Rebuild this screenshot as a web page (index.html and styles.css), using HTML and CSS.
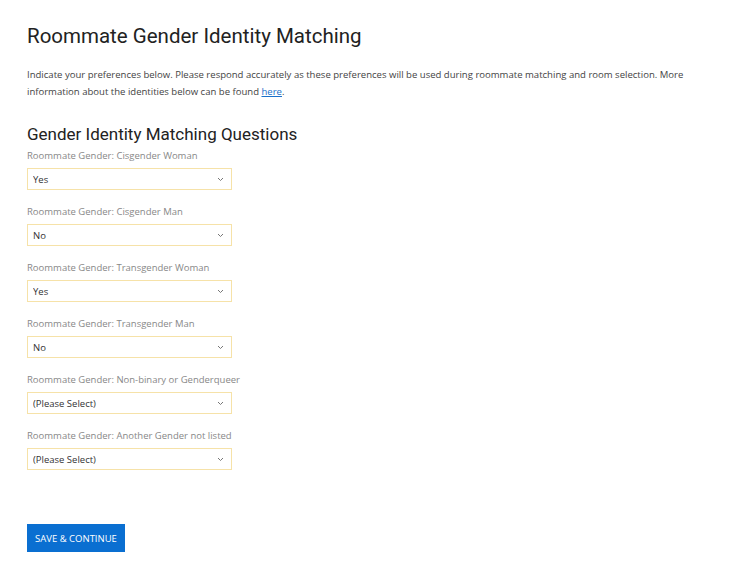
FILE: index.html
```html
<!DOCTYPE html>
<html lang="en">

<head>
    <meta charset="UTF-8">
    <meta name="viewport" content="width=device-width, initial-scale=1.0">
    <title>Roommate Gender Identity Matching</title>
    <link rel="stylesheet" href="styles.css">
</head>

<body>
    <div class="page">
        <h1 class="title">Roommate Gender Identity Matching</h1>
        <p class="intro">Indicate your preferences below. Please respond accurately as these preferences will be used during roommate matching and room selection. More information about the identities below can be found <a href="#">here</a>.</p>

        <h2 class="subtitle">Gender Identity Matching Questions</h2>

        <div class="field">
            <label class="label">Roommate Gender: Cisgender Woman</label>
            <div class="select-wrap">
                <select class="select">
                    <option>(Please Select)</option>
                    <option selected>Yes</option>
                    <option>No</option>
                </select>
                <svg class="chev" width="7" height="5" viewBox="0 0 7 5"><path d="M1 1 L3.5 3.5 L6 1" fill="none" stroke="#777" stroke-width="1"/></svg>
            </div>
        </div>

        <div class="field">
            <label class="label">Roommate Gender: Cisgender Man</label>
            <div class="select-wrap">
                <select class="select">
                    <option>(Please Select)</option>
                    <option>Yes</option>
                    <option selected>No</option>
                </select>
                <svg class="chev" width="7" height="5" viewBox="0 0 7 5"><path d="M1 1 L3.5 3.5 L6 1" fill="none" stroke="#777" stroke-width="1"/></svg>
            </div>
        </div>

        <div class="field">
            <label class="label">Roommate Gender: Transgender Woman</label>
            <div class="select-wrap">
                <select class="select">
                    <option>(Please Select)</option>
                    <option selected>Yes</option>
                    <option>No</option>
                </select>
                <svg class="chev" width="7" height="5" viewBox="0 0 7 5"><path d="M1 1 L3.5 3.5 L6 1" fill="none" stroke="#777" stroke-width="1"/></svg>
            </div>
        </div>

        <div class="field">
            <label class="label">Roommate Gender: Transgender Man</label>
            <div class="select-wrap">
                <select class="select">
                    <option>(Please Select)</option>
                    <option>Yes</option>
                    <option selected>No</option>
                </select>
                <svg class="chev" width="7" height="5" viewBox="0 0 7 5"><path d="M1 1 L3.5 3.5 L6 1" fill="none" stroke="#777" stroke-width="1"/></svg>
            </div>
        </div>

        <div class="field">
            <label class="label">Roommate Gender: Non-binary or Genderqueer</label>
            <div class="select-wrap">
                <select class="select">
                    <option selected>(Please Select)</option>
                    <option>Yes</option>
                    <option>No</option>
                </select>
                <svg class="chev" width="7" height="5" viewBox="0 0 7 5"><path d="M1 1 L3.5 3.5 L6 1" fill="none" stroke="#777" stroke-width="1"/></svg>
            </div>
        </div>

        <div class="field">
            <label class="label">Roommate Gender: Another Gender not listed</label>
            <div class="select-wrap">
                <select class="select">
                    <option selected>(Please Select)</option>
                    <option>Yes</option>
                    <option>No</option>
                </select>
                <svg class="chev" width="7" height="5" viewBox="0 0 7 5"><path d="M1 1 L3.5 3.5 L6 1" fill="none" stroke="#777" stroke-width="1"/></svg>
            </div>
        </div>

        <button class="btn">Save &amp; Continue</button>
    </div>
</body>

</html>
```

FILE: styles.css
```css
body {
    margin: 0;
    background-color: #fff;
    font-family: "Open Sans", "Liberation Sans", sans-serif;
    color: #333;
}

.page {
    padding: 23px 27px 0 27px;
}

.title {
    margin: 0;
    font-family: Roboto, "Liberation Sans", sans-serif;
    font-weight: 400;
    font-size: 20.5px;
    line-height: 26px;
    color: #222;
}

.intro {
    margin: 17px 0 0 0;
    max-width: 690px;
    font-size: 9.55px;
    line-height: 17px;
    color: #444;
}

.intro a {
    color: #1a6fc9;
}

.subtitle {
    margin: 23px 0 4px 0;
    font-family: Roboto, "Liberation Sans", sans-serif;
    font-weight: 400;
    font-size: 17px;
    line-height: 22px;
    color: #222;
}

.field {
    margin-bottom: 15px;
}

.label {
    display: block;
    font-size: 9.5px;
    line-height: 14px;
    color: #888;
    margin-bottom: 5px;
}

.select-wrap {
    position: relative;
    width: 205px;
}

.select {
    display: block;
    appearance: none;
    -webkit-appearance: none;
    width: 205px;
    height: 22px;
    margin: 0;
    padding: 0 0 0 5px;
    border: 1px solid #f6e2a8;
    border-radius: 0;
    background-color: #fff;
    font-family: "Open Sans", "Liberation Sans", sans-serif;
    font-size: 9.5px;
    color: #333;
}

.chev {
    position: absolute;
    right: 8px;
    top: 9px;
    pointer-events: none;
}

.btn {
    display: block;
    margin-top: 54px;
    width: 98px;
    height: 28px;
    padding: 0;
    border: 0;
    border-radius: 0;
    background-color: #0a6fd1;
    color: #fff;
    font-family: "Open Sans", "Liberation Sans", sans-serif;
    font-size: 9.5px;
    text-transform: uppercase;
    cursor: pointer;
}

.btn:hover {
    background-color: #085db0;
}
```
